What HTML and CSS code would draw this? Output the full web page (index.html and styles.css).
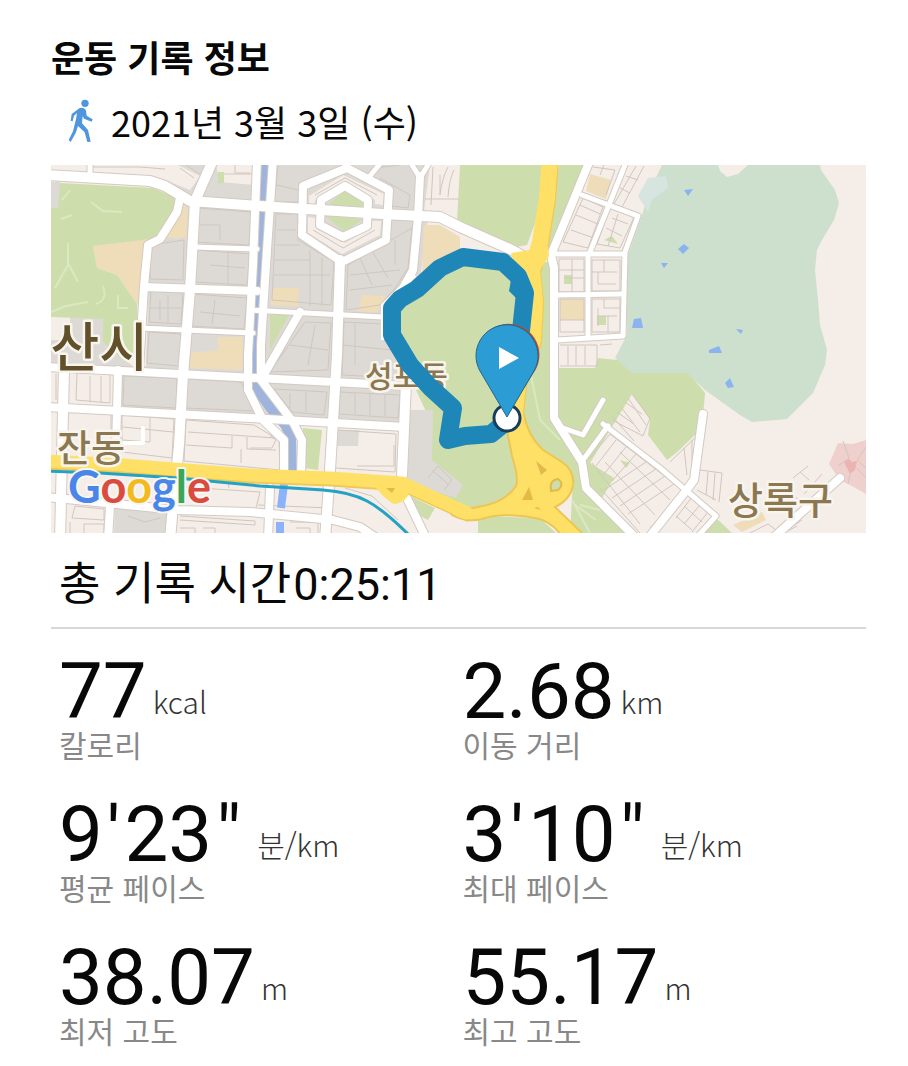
FILE: index.html
```html
<!DOCTYPE html>
<html lang="ko">
  <head>
    <meta charset="UTF-8" />
    <meta name="viewport" content="width=device-width, initial-scale=1.0" />
    <title>운동 기록 정보</title>
    <link rel="stylesheet" href="styles.css">
  </head>
  <body>
    <main class="record">
      <h1 class="title">운동 기록 정보</h1>
      <p class="date">
        <svg class="walk" viewBox="84 240 76 132" aria-hidden="true">
          <circle cx="134" cy="253" r="11" />
          <path d="M118 267Q132 264 137 275L139 290L157 301L154 308L131 299L127 291L125 313L143 333L151 368L141 369L133 340L113 321L106 342L91 369L85 363L98 337L107 300L110 282L101 290L97 307L91 305L94 285Z" />
        </svg>
        <span>2021년 3월 3일 (수)</span>
      </p>

      <svg class="map" viewBox="51 165 815 368" role="img" aria-label="이동 경로">
        <defs>
          <g id="roads-lg">
            <path d="M45 175L150 181L165 186L190 201L260 206L383 214L440 217L460 227L512 250L533 262" />
            <path d="M213 160L195 201L190 290L183 375L179 445L173 505L170 540" />
            <path d="M340 260L337 355L330 470L325 540" />
            <path d="M406 383L402 475" />
            <path d="M64 370L60 540" />
          </g>
          <g id="roads-md">
            <path d="M257 160L253 265L248 355V390L263 420L284 440V472" />
            <path d="M273 160L266 265L261 345V380L293 422L302 440L301 475" />
            <path d="M180 198L177 212L160 239L148 245L144 286L139 370" />
            <path d="M144 287L257 291" />
            <path d="M45 367L258 378L408 386" />
            <path d="M45 407L250 418L405 427" />
            <path d="M300 312L262 378" />
            <path d="M118 370L116 450" />
            <path d="M347 168L303 186L302 235L342 262L386 240L389 190Z" />
            <path d="M345 186L321 200L320 225L343 237L367 226L368 200Z" />
            <path d="M420 176L418 217L413 270L403 288L387 305" />
            <path d="M45 497L177 510L250 512L333 520L360 527L375 537" />
            <path d="M270 488L268 540M110 506L108 540M402 488L427 540" />
            <path d="M590 160L551 255L554 268V418L582 462L586 488L636 538" />
            <path d="M703 414L694 480L685 492L650 536" />
            <path d="M840 478L774 537" />
          </g>
          <g id="roads-sm">
            <path d="M193 247L257 249M140 328L253 333M250 310L383 317" />
            <path d="M90 160V177M383 160L370 176M409 160L420 178L431 160" />
            <path d="M627 160L590 252M552 254H625M582 195L638 216L625 252L623 336L557 340" />
            <path d="M588 255V337M556 295L623 294" />
            <path d="M563 428L583 435L603 400" />
            <path d="M583 460L608 426M603 424L660 468L716 516L698 536" />
          </g>
          <g id="highway">
            <path d="M550 155L547 198L540 242L532 270L535 300L533 340L519 375L515 412L518 440" stroke-width="16" />
            <path d="M45 461L110 464L250 475L330 478L402 483L430 496L467 513" stroke-width="13" />
          </g>
        </defs>

        <rect class="land" x="51" y="165" width="815" height="368" />

        <!-- city blocks -->
        <g class="block">
          <path d="M150 165H435L420 280L383 312L406 385L403 427L337 424L120 408L122 370L146 366L150 240L190 200Z" />
          <path d="M51 182H60V208H51ZM70 317H103L112 345L138 372H51V340H70Z" />
          <path d="M155 165L170 165L200 184L190 196L165 184Z" />
          <path d="M338 430H359L358 446H337Z" />
          <path d="M115 509H169L168 533H114ZM56 508H61L60 533H55Z" />
        </g>
        <g class="land">
          <path d="M85 165H178L200 176L190 190L160 178L85 172Z" />
          <path d="M216 165H255V185L220 182ZM430 165H460V218L424 212Z" />
          <path d="M51 375H115V405H51ZM407 388L440 395L432 410H407Z" />
          <path d="M309 196L343 175L384 194L383 205L375 204V200L345 182L315 200V206H309ZM308 217L316 218V227L345 243L371 228L372 221H381L380 235L342 254L308 233Z" />
        </g>
        <g class="sand">
          <path d="M93 246L152 234L142 298L137 304L117 275L97 268ZM181 203L188 207L186 238H167Z" />
          <path d="M218 337H243L242 370L190 368V353L218 350Z" />
          <path d="M273 288H299L298 306L271 305ZM362 295L386 296L376 313L358 311Z" />
          <path d="M424 225H440L460 237V252L437 264L422 280ZM590 174L611 180L606 199L586 191Z" />
        </g>
        <g class="green">
          <path d="M60 183L153 188L174 197L176 207L158 238L93 246L97 268L117 275L137 304L139 350L125 362L103 342L103 319L51 317V208H58Z" />
          <path d="M460 165H542L538 215L527 245L510 248L457 222ZM559 165H584L553 250L544 250Z" />
          <path d="M387 305L430 265L465 255L525 262V420L527 485L495 507L460 508L430 490V420L395 345Z" />
          <path d="M326 206L345 191L364 203V208ZM325 216L363 219L345 232ZM270 315H289L270 350ZM303 428L322 430L318 470L304 468Z" />
          <path d="M218 172H224V183H218ZM408 495L435 508L428 520L420 516ZM478 516L540 518L556 533H478Z" />
          <path d="M520 262H552L556 368H595L600 350H620L636 368L687 371L705 393L702 428L667 462L640 533H570L573 480L518 430Z" />
        </g>
        <path class="block" d="M407 410H433L432 460L463 485L456 498L407 482Z" />
        <path class="land" d="M632 394L650 420L648 435L667 460L703 432L722 440V500L732 533H636L602 498L614 478L590 463L610 430Z" />
        <path class="land" d="M558 344L624 340L617 360L597 358L595 366H558Z" />
        <path class="green" d="M590 468L607 478L595 492L589 488ZM716 518L732 533H704ZM620 460L630 463L626 468Z" />
        <path class="forest" d="M662 165H718L720 171L727 177L738 174L748 165H820L821 170L835 190L839 203L834 220L822 240L817 250L815 270L818 300L820 325L827 350L825 365L813 393L787 419L752 422L740 415L705 390L687 373H632L615 358L627 335V258L641 218L650 190Z" />
        <path class="lake" d="M638 196L648 178L666 176L668 188L652 200L648 212Z" />
        <g class="pond">
          <path d="M684 190L693 189L688 196ZM678 249L684 244L689 248L683 254ZM661 263H668L664 268Z" />
          <path d="M634 319L641 318L643 328H632ZM709 350L719 346L722 353H709ZM736 329L743 330L741 334ZM725 383L730 378L734 387L728 388Z" />
        </g>
        <g class="site">
          <path d="M829 464L838 443L853 444L866 440V494L852 486L840 480Z" />
          <path class="site-core" d="M844 462L849 459L852 462L857 461L855 470L850 474Z" />
        </g>
        <path class="sand" d="M733 525L762 512L766 520L742 532ZM560 299H584V320H560Z" />
        <path class="green" d="M564 275H572V284H564ZM597 316H606V325H597ZM604 240L612 236L618 244Z" />

        <!-- parcel lines -->
        <g class="parcels">
          <path d="M198 208L251 212L249 245L196 242ZM195 250L250 254L247 285L194 282ZM192 294L247 298L244 329L191 326Z" />
          <path d="M151 245L184 240L183 280L150 279ZM151 291L183 293L181 324L149 322ZM149 332L181 334L179 366L147 363Z" />
          <path d="M200 225H220V240M210 265L245 268M228 252V284M200 312L240 316M215 300L212 324M160 300V320M168 295V322M150 308H182" />
          <path d="M276 214H298V240L334 262L331 305L272 300ZM277 230H296M276 245H300M275 260H310M274 275H330M310 250V306M322 258V306" />
          <path d="M348 265L412 228L408 268L395 288L380 305L346 310ZM360 258L372 285M373 252L388 278M350 275L400 270M350 290L392 285M395 240V265" />
          <path d="M305 322L331 323L328 370L270 372ZM344 322L382 324L396 345L400 378L342 375ZM315 325L308 365M290 345L328 350M355 323V365M343 345L392 350" />
          <path d="M274 389L327 392L324 415L292 412ZM340 392L400 395L398 418L339 414ZM290 393V408M306 392V412M355 393V414M370 394V415M385 395V416" />
          <path d="M124 376L177 378L176 408L123 405ZM187 379L241 382L255 411L186 408ZM122 415L174 419L172 458L122 452ZM186 420L254 425L279 440L280 470L184 461Z" />
          <path d="M188 432L275 438M232 436V448L186 445M247 437V449L276 450M241 449V463M123 427L173 432M150 418V442L122 440M75 412L111 414V440M90 376V402M101 376V403M77 372L110 374V403L76 400Z" />
          <path d="M60 372L58 403M56 374V400M270 436L276 440L272 448H250M338 430L396 434L395 472L336 468M394 445V466H357" />
          <path d="M180 516L255 521V525L180 520M180 528H195V533M203 528H215V533M75 506L104 509V520L72 518ZM70 522V533M84 533V524H104V533M128 516L145 522L160 518M290 522H318V533M296 528H310V533" />
          <path d="M228 480L229 488M185 487L260 492L256 508M330 480V508L258 505M345 488L372 496L398 520" />
          <path d="M433 167L431 205M440 175V195M440 195Q442 178 448 167M448 197Q449 180 454 170M425 199H459M180 168L194 178M186 165L200 174M235 165V173H250M224 174H252M140 167L165 169M93 167H140" />
          <path d="M315 195L345 178L377 195M313 230L343 248L375 230M380 178L410 195L408 208L392 206M374 168L400 165M278 166L274 202H298M277 185L298 190" />
          <path d="M583 198L603 207L588 248L563 242ZM610 208L634 217L620 248L597 244ZM576 215L598 224M571 230L594 238M580 205L600 214M612 218L628 224M606 228L622 236M618 214L608 246" />
          <path d="M559 259H584V292H559ZM592 260H620V291H592ZM560 299H584V332H560ZM592 299H620V332H592ZM559 270H584M572 259V270M565 278H584M572 270V292M592 272H617M598 272V284H616M604 260V272M560 320H584M604 299V308H620M598 308V326M598 316H617M608 316V332" />
          <path d="M593 167L615 170L606 195M604 165L600 175M636 166L614 204M644 166L622 207M620 188L630 193M626 176L638 180" />
          <path d="M560 345H597V366H560M568 346V365M576 346V365M585 346V365M600 345L612 344" />
          <path d="M628 398L646 425M621 407L640 432M612 416L634 441M617 412L634 424M625 402L642 414M632 394L650 418L643 436L612 420" />
          <path d="M590 458L610 434L684 491L650 528M596 466L616 440M604 474L626 447M612 481L636 454M604 490L646 462M612 498L656 469M620 506L665 476M628 514L674 484M620 452L670 500M605 462L655 515M592 463L640 524M600 488L640 533" />
          <path d="M700 433L670 462M692 440V472M684 448L687 475M700 470L722 473L719 502M708 472L706 495M715 473L713 500M697 490L716 500M692 497L676 518M700 505L684 524M708 512L692 532M684 506L702 522M676 516L692 530" />
          <path d="M793 478L808 466M800 472L809 480M804 494L822 474M782 490L800 500M750 533L768 524L776 530M790 528L802 520M784 533L797 526M843 441L849 458L838 466M866 447L857 460L866 468M850 474L848 484M857 468L866 478" />
          <path d="M432 470L448 484M428 478L438 466L452 480L444 490" />
        </g>
        <g class="trails">
          <path d="M91 202L103 211L122 212M61 219L72 215M70 190L62 200M68 243V265L55 288M69 265L78 282M103 286Q108 300 96 304M118 295V308H128M51 312L66 306L88 302" />
          <path d="M530 370L540 420L560 440M575 505L596 520M572 500L590 533M580 505L600 510" />
        </g>
        <path class="canal" d="M267 160L262 210L258 300L254 345V380L261 395L272 410L285 425L291 436L292 472" />

        <use class="road-edge lg" href="#roads-lg" />
        <use class="road-edge md" href="#roads-md" />
        <use class="road-edge sm" href="#roads-sm" />
        <use class="road lg" href="#roads-lg" />
        <use class="road md" href="#roads-md" />
        <use class="road sm" href="#roads-sm" />
        <path class="road lane" d="M124 443H143V428" />

        <path class="stream" d="M284 484L281 508M280 522V536" />
        <use class="highway-edge" href="#highway" />
        <path class="junction" d="M506 425L524 415Q528 436 543 450L562 462Q575 471 573 486Q570 500 555 507L585 536H562Q550 520 535 518Q500 512 482 519Q466 523 452 515L446 503Q462 511 478 507Q505 503 516 486Q519 478 512 456Z" />
        <use class="highway" href="#highway" />
        <path class="highway-fill" d="M511 253L530 250L548 246L549 256L540 270L538 290L522 285ZM376 482L410 480L408 496Q402 504 394 504Q386 500 376 488Z" />
        <path class="junction-hole" d="M536 461L547 470L541 475ZM529 487L533 500H522ZM534 508L541 510L538 507ZM386 488H395L392 493Z" />
        <path class="junction-hole grass" d="M551 491Q549 480 558 479Q565 484 558 490Z" />
        <path class="subway" d="M45 471L100 473L177 478L260 486L323 490Q350 492 367 501T410 536" />

        <text class="place" x="365" y="387" font-size="30">성포동</text>
        <path class="route-edge" d="M383 340V305L415 275" />
        <path class="route" d="M507 421L491 434L465 436L448 440L453 408L430 387L410 365L392 335V308L400 299L417 289L440 268L463 257L503 262L518 276L525 293L520 340" />
        <path class="route-bump" d="M511 280L509 291L518 300L522 280Z" />

        <text class="place city" x="148" y="367" font-size="53" text-anchor="end">산시</text>
        <text class="place" x="57" y="462" font-size="37">잔동</text>
        <text class="place" x="728" y="514" font-size="38">상록구</text>
        <text class="google" x="68" y="503"><tspan fill="#4a86e8">G</tspan><tspan fill="#db4a3f">o</tspan><tspan fill="#f2ba1d">o</tspan><tspan fill="#4a86e8">g</tspan><tspan fill="#3aa757">l</tspan><tspan fill="#db4a3f">e</tspan></text>

        <!-- start / finish pin -->
        <circle class="pin-dot" cx="507" cy="418" r="13" />
        <path class="pin-back" d="M508 414L482 371A31 31 0 1 1 536 369Z" />
        <path class="pin" d="M507 417L480 371A31 31 0 1 1 534 371Z" />
        <path class="pin-play" d="M499 347L519 358L499 369Z" />
      </svg>

      <p class="total">총 기록 시간<span class="time">0:25:11</span></p>

      <section class="stats">
        <div class="stat">
          <p class="value">77<span class="unit">kcal</span></p>
          <p class="label">칼로리</p>
        </div>
        <div class="stat">
          <p class="value">2.68<span class="unit">km</span></p>
          <p class="label">이동 거리</p>
        </div>
        <div class="stat">
          <p class="value">9<span class="mark">'</span>23<span class="mark">"</span><span class="unit pace">분/km</span></p>
          <p class="label">평균 페이스</p>
        </div>
        <div class="stat">
          <p class="value">3<span class="mark">'</span>10<span class="mark">"</span><span class="unit pace">분/km</span></p>
          <p class="label">최대 페이스</p>
        </div>
        <div class="stat">
          <p class="value">38.07<span class="unit">m</span></p>
          <p class="label">최저 고도</p>
        </div>
        <div class="stat">
          <p class="value">55.17<span class="unit">m</span></p>
          <p class="label">최고 고도</p>
        </div>
      </section>
    </main>
  </body>
</html>
```
FILE: styles.css
```css
* {
  margin: 0;
  padding: 0;
  box-sizing: border-box;
}
body {
  background-color: #fff;
  color: #080808;
  font-family: "Noto Sans CJK KR", sans-serif;
}
.record {
  padding: 34px 42px 16px 51px;
}
.title {
  font-size: 36px;
  line-height: 44px;
  font-weight: 700;
}
.date {
  display: flex;
  align-items: center;
  gap: 17px;
  padding: 19px 0 20px 17px;
  font-size: 36px;
  line-height: 48px;
}
.walk {
  width: 26px;
  height: 44px;
  fill: #4f96dc;
}

/* map */
.map {
  display: block;
  width: 100%;
  height: auto;
}
.land {
  fill: #f5ede7;
}
.block {
  fill: #dddad6;
}
.sand {
  fill: #eeddb8;
}
.green {
  fill: #cddeac;
}
.forest {
  fill: #cddfcd;
}
.lake {
  fill: #d6e5df;
}
.pond {
  fill: #8ab4f0;
}
.site {
  fill: #f0d0cc;
}
.site-core {
  fill: #eab4b2;
}
.parcels {
  fill: none;
  stroke: #cfc7bf;
  stroke-width: 1;
}
.trails {
  fill: none;
  stroke: #dce8c0;
  stroke-width: 2;
}
.canal {
  fill: none;
  stroke: #9fb4dc;
  stroke-width: 10;
}
.stream {
  fill: none;
  stroke: #8cb2fb;
  stroke-width: 8;
}
.road,
.road-edge {
  fill: none;
  stroke-linejoin: round;
  stroke-linecap: round;
}
.road {
  stroke: #fff;
}
.road-edge {
  stroke: #d3cac2;
}
.road.lg {
  stroke-width: 10;
}
.road-edge.lg {
  stroke-width: 12;
}
.road.md {
  stroke-width: 8;
}
.road-edge.md {
  stroke-width: 10;
}
.road.sm {
  stroke-width: 5;
}
.road-edge.sm {
  stroke-width: 7;
}
.road.lane {
  stroke-width: 4;
}
.highway,
.highway-edge {
  fill: none;
  stroke: #ffe066;
  stroke-linejoin: round;
  stroke-linecap: round;
}
.highway-edge {
  stroke: #f0c855;
  transform: translate(1px, 2px);
}
.highway-fill {
  fill: #ffe066;
}
.junction {
  fill: #ffe066;
  stroke: #ecc552;
  stroke-width: 2;
}
.junction-hole {
  fill: #e2b94a;
}
.junction-hole.grass {
  fill: #cddeac;
  stroke: #e2b94a;
  stroke-width: 2;
}
.subway {
  fill: none;
  stroke: #23a2c4;
  stroke-width: 3;
}
.place {
  fill: #8c7850;
  stroke: #f8f4ee;
  stroke-width: 5;
  stroke-linejoin: round;
  paint-order: stroke;
  font-weight: 500;
}
.place.city {
  fill: #61502a;
}
.google {
  font-family: Lato, sans-serif;
  font-size: 45px;
  font-weight: 700;
  stroke: #f8f6f2;
  stroke-width: 4;
  stroke-linejoin: round;
  paint-order: stroke;
}
.route {
  fill: none;
  stroke: #1f87b7;
  stroke-width: 18;
  stroke-linejoin: round;
}
.route-bump {
  fill: #1f87b7;
}
.route-edge {
  fill: none;
  stroke: #fff;
  stroke-width: 4;
  stroke-linejoin: round;
}
.pin {
  fill: #2b9cd4;
  stroke: #23678c;
  stroke-width: 1;
}
.pin-back {
  fill: #b34a3c;
}
.pin-dot {
  fill: #fff;
  stroke: #173c5c;
  stroke-width: 3;
}
.pin-play {
  fill: #fff;
}

/* numbers */
.total {
  padding: 16px 8px 10px;
  border-bottom: 2px solid #d8d8d8;
  font-size: 45px;
  line-height: 64px;
}
.time {
  margin-left: 2px;
  font-family: Roboto, sans-serif;
}
.stats {
  display: grid;
  grid-template-columns: 1fr 1fr;
  row-gap: 38px;
  padding: 27px 0 0 8px;
}
.value {
  display: flex;
  align-items: flex-end;
  font-family: Roboto, sans-serif;
  font-size: 78px;
  line-height: 72px;
}
.mark {
  padding: 0 4px;
}
.unit {
  margin-left: 6px;
  padding-bottom: 7px;
  color: #333;
  font-family: "Noto Sans CJK KR", sans-serif;
  font-size: 30px;
  line-height: 40px;
  font-weight: 300;
}
.unit.pace {
  margin-left: 12px;
}
.label {
  color: #888;
  font-size: 30px;
  line-height: 33px;
}
```
